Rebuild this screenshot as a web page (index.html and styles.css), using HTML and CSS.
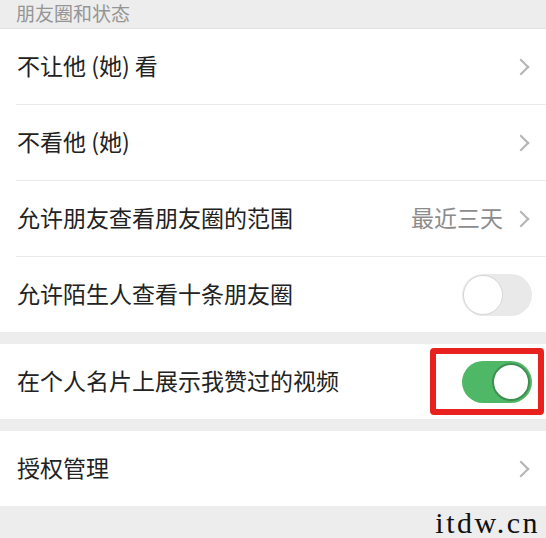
FILE: index.html
```html
<!DOCTYPE html>
<html lang="zh-CN">
<head>
    <meta charset="UTF-8">
    <meta name="viewport" content="width=device-width, initial-scale=1.0">
    <title>朋友圈和状态</title>
    <link rel="stylesheet" href="styles.css">
</head>
<body>
    <div class="section-title">朋友圈和状态</div>

    <div class="group">
        <div class="row">
            <span class="label">不让他 (她) 看</span>
            <span class="chevron"></span>
        </div>
        <div class="row">
            <span class="label">不看他 (她)</span>
            <span class="chevron"></span>
        </div>
        <div class="row">
            <span class="label">允许朋友查看朋友圈的范围</span>
            <span class="value">最近三天</span>
            <span class="chevron"></span>
        </div>
        <div class="row">
            <span class="label">允许陌生人查看十条朋友圈</span>
            <span class="switch"></span>
        </div>
    </div>

    <div class="group">
        <div class="row">
            <span class="label">在个人名片上展示我赞过的视频</span>
            <span class="highlight">
                <span class="switch on"></span>
            </span>
        </div>
    </div>

    <div class="group">
        <div class="row">
            <span class="label">授权管理</span>
            <span class="chevron"></span>
        </div>
    </div>

    <div class="footer">
        <span class="watermark">itdw.cn</span>
    </div>
</body>
</html>
```

FILE: styles.css
```css
body {
    margin: 0;
    padding: 0;
    background: #ededed;
    font-family: "Noto Sans CJK SC", "Noto Sans", sans-serif;
    color: #1a1a1a;
    width: 546px;
    height: 538px;
    overflow: hidden;
}

.section-title {
    height: 29px;
    line-height: 26px;
    padding-left: 16px;
    font-size: 19px;
    color: #959595;
    border-bottom: 1px solid #e2e2e2;
    box-sizing: border-box;
}

.group {
    background: #fff;
    margin-bottom: 12px;
}

.row {
    display: flex;
    align-items: center;
    height: 76px;
    margin-left: 16px;
    padding-right: 14px;
    border-bottom: 1px solid #e9e9e9;
    box-sizing: border-box;
}

.row:last-child {
    border-bottom: none;
    height: 75px;
}

.label {
    flex: 1;
    font-size: 23px;
    padding-left: 1px;
    padding-bottom: 4px;
    color: #222;
}

.value {
    font-size: 23px;
    color: #8c8c8c;
    margin-right: 12px;
    padding-bottom: 4px;
}

.chevron {
    width: 10px;
    height: 10px;
    border-top: 2px solid #b4b4b4;
    border-right: 2px solid #b4b4b4;
    transform: rotate(45deg);
    margin-right: 5px;
}

.switch {
    display: block;
    position: relative;
    width: 70px;
    height: 42px;
    border-radius: 21px;
    background: #e9e9e9;
    box-sizing: border-box;
}

.switch::after {
    content: "";
    position: absolute;
    left: 1px;
    top: 1px;
    width: 40px;
    height: 40px;
    border-radius: 50%;
    background: #fff;
    border: 1px solid #d6d6d6;
    box-sizing: border-box;
}

.switch.on {
    background: #4fb866;
}

.switch.on::after {
    left: auto;
    right: 2px;
    top: 2px;
    width: 38px;
    height: 38px;
    border: 2px solid #3e8f52;
}

/* red annotation frame round the switch */
.highlight {
    display: block;
    border: 6px solid #e8211f;
    border-radius: 4px;
    padding: 7px 6px 6px 26px;
    margin: -13px -12px -12px 0;
}

.footer {
    display: flex;
    justify-content: flex-end;
    padding: 0 6px 0 0;
    margin-top: -10px;
}

.watermark {
    font-family: "Liberation Serif", serif;
    font-size: 30px;
    letter-spacing: 2.5px;
    color: #111;
    line-height: 30px;
}
```
